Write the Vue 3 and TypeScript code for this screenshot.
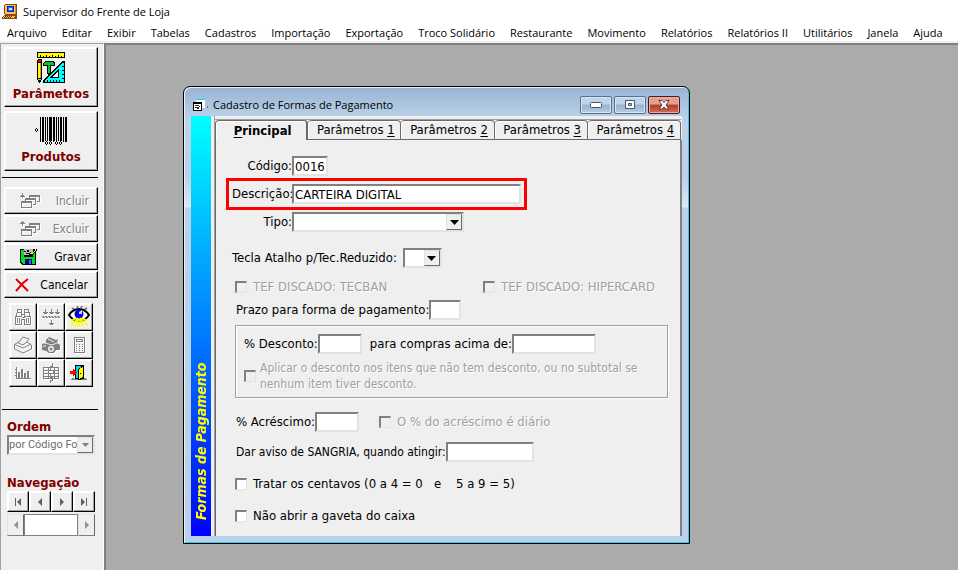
<script setup lang="ts">
import { ref } from 'vue'

const menus: string[] = [
  'Arquivo', 'Editar', 'Exibir', 'Tabelas', 'Cadastros', 'Importação', 'Exportação',
  'Troco Solidário', 'Restaurante', 'Movimento', 'Relatórios', 'Relatórios II',
  'Utilitários', 'Janela', 'Ajuda',
]

const tabs = [1, 2, 3, 4]
const activeTab = ref(0)

const codigo = ref('0016')
const descricao = ref('CARTEIRA DIGITAL')
const tipo = ref('')
const tecla = ref('')
const prazo = ref('')
const desconto = ref('')
const acima = ref('')
const acrescimo = ref('')
const sangria = ref('')
const centavos = ref(false)
const gaveta = ref(false)
</script>

<template>
  <div class="app">
    <header class="titlebar">
      <svg class="app-icon" width="16" height="16" viewBox="0 0 16 16" shape-rendering="crispEdges">
        <path d="M3 0h11l1 1v9l-1 1H3L2 10V1z" fill="#8a4b08" />
        <path d="M3 1h10v9H3z" fill="#ffc45c" />
        <path d="M13 1h1v9h-1z" fill="#d98a1c" />
        <path d="M5 2h7v6H5z" fill="#0a1fb4" />
        <path d="M6 3h5v4H6z" fill="#2a6cff" />
        <path d="M7 4h3v2H7z" fill="#b8e0ff" />
        <path d="M2 11h12l1 1v3H0v-2z" fill="#8a4b08" />
        <path d="M2 12h11l-1 2H1z" fill="#ffc45c" />
        <path d="M3 12h1v1H3zM5 12h1v1H5zM7 12h1v1H7zM9 12h1v1H9zM2 13h1v1H2zM4 13h1v1H4zM6 13h1v1H6zM8 13h1v1H8z" fill="#4a2a00" />
      </svg>
      <span>Supervisor do Frente de Loja</span>
    </header>

    <nav class="menubar">
      <button v-for="m in menus" :key="m" type="button">{{ m }}</button>
    </nav>

    <div class="body">
      <aside class="sidebar">
        <button class="raised big" type="button">
          <svg width="28" height="31" viewBox="0 0 28 31" shape-rendering="crispEdges">
            <path d="M0 0h28v6H0z" />
            <path d="M1 1h26v4H1z" fill="#ff0" />
            <path d="M3 3h1v2H3zM6 4h1v1H6zM9 3h1v2H9zM12 4h1v1h-1zM15 3h1v2h-1zM18 4h1v1h-1zM21 3h1v2h-1zM24 4h1v1h-1z" />
            <path d="M0 8l1-1h3l1 1v19l-1 2-1 2H2l-1-2-1-2z" />
            <path d="M1 8h3v2H1z" fill="#e00000" />
            <path d="M1 11h2v15H1z" fill="#ff0" />
            <path d="M3 11h1v15H3z" fill="#d8a000" />
            <path d="M1 27h3v1H1z" fill="#c0c0c0" />
            <path d="M26 9h2v22H6v-3z" />
            <path d="M26 11h1v19H8v-2z" fill="#0ff" />
            <path d="M22 16v10H12z" />
            <path d="M21 19v6h-6z" fill="#efefef" />
            <path d="M10 28h1v2h-1zM13 28h1v2h-1zM16 28h1v2h-1zM19 28h1v2h-1zM22 28h1v2h-1zM25 26h2v1h-2zM25 22h2v1h-2zM25 18h2v1h-2zM25 14h2v1h-2z" />
            <path d="M8 9h8l2 2v3h-4v8l-2 2-2-2v-8H6v-3z" />
            <path d="M8 10h7l2 1v2h-4v8h-2v-8H7v-2z" fill="#00c828" />
          </svg>
          <span>Parâmetros</span>
        </button>

        <button class="raised big" type="button">
          <svg width="33" height="29" viewBox="0 0 33 29" shape-rendering="crispEdges">
            <path d="M5 0h1v25H5zM7 0h2v25H7zM10 0h1v25h-1zM12 0h1v25h-1zM14 0h3v25h-3zM18 0h2v25h-2zM21 0h1v25h-1zM23 0h1v25h-1zM25 0h2v25h-2zM28 0h1v25h-1zM30 0h2v25h-2z" />
            <path d="M9 24h8v5H9zM19 24h8v5h-8z" fill="#efefef" />
            <path d="M1 11h1v1H1zM0 12h1v2H0zM2 12h1v2H2zM1 14h1v1H1zM11 24h1v1h-1zM10 25h1v2h-1zM12 25h1v2h-1zM11 27h1v1h-1zM15 24h1v1h-1zM14 25h1v2h-1zM16 25h1v2h-1zM15 27h1v1h-1zM21 24h1v1h-1zM20 25h1v2h-1zM22 25h1v2h-1zM21 27h1v1h-1zM25 24h1v1h-1zM24 25h1v2h-1zM26 25h1v2h-1zM25 27h1v1h-1z" />
          </svg>
          <span>Produtos</span>
        </button>

        <hr />

        <div class="actions">
          <button class="raised act" type="button" disabled>
            <svg class="etched" width="20" height="16" viewBox="0 0 20 16" fill="none" stroke="#808080" shape-rendering="crispEdges">
              <path d="M2.500 0v5M0 3.500h5M1 2.500h3" />
              <path d="M9.500 5.500v-3h10v6h-3M5.500 8.500v-3h10v6h-3M1.500 8.500h10v6h-10zM9 3.500h10M5 6.500h10M1 9.500h10" />
            </svg>
            <span>Incluir</span>
          </button>
          <button class="raised act" type="button" disabled>
            <svg class="etched" width="20" height="16" viewBox="0 0 20 16" fill="none" stroke="#808080" shape-rendering="crispEdges">
              <path d="M2.500 0v5M0 2.500h5M1 1.500h3" />
              <path d="M9.500 5.500v-3h10v6h-3M5.500 8.500v-3h10v6h-3M1.500 8.500h10v6h-10zM9 3.500h10M5 6.500h10M1 9.500h10" />
            </svg>
            <span>Excluir</span>
          </button>
          <button class="raised act" type="button">
            <svg width="18" height="17" viewBox="0 0 18 17" shape-rendering="crispEdges">
              <path d="M0 1h14l2 2v14H2l-2-2z" />
              <path d="M1 2h3v7h9V5h2v11H3l-2-2z" fill="#00e020" />
              <path d="M4 1h9v6H4z" fill="#c0c0c0" />
              <path d="M4 3h2v1H4zM7 2h2v2H7zM6 5h4v1H6z" />
              <path d="M5 11h7v5H5z" fill="#000080" />
              <path d="M9 12h2v4H9z" fill="#2868ff" />
              <path d="M8 6l2-2 2 1 4-4 1 1-4 5-3 1z" />
              <path d="M10 5h2l4-3v1l-4 3h-2z" fill="#ff0" />
            </svg>
            <span>Gravar</span>
          </button>
          <button class="raised act cancel" type="button">
            <svg width="14" height="14" viewBox="0 0 14 14" fill="none">
              <path d="M1 1l4 4 8 8M13 1L8 5 1 13" stroke="#e00000" stroke-width="2" />
            </svg>
            <span>Cancelar</span>
          </button>
        </div>

        <div class="tools">
          <button class="raised" type="button" disabled aria-label="Localizar">
            <svg class="etched" width="16" height="18" viewBox="0 0 16 18" fill="none" stroke="#808080" shape-rendering="crispEdges">
              <path d="M2.500 4.500v-3h4v3M9.500 4.500v-3h4v3M1.500 4.500h5v4h-6v8h6v-5h3v5h6v-8h-6v-4h5v4M1.500 4.500v4M6.500 6.500h3M6.500 9.500h3M2.500 10v5M4.500 10v5M11.500 10v5M13.500 10v5" />
            </svg>
          </button>
          <button class="raised" type="button" disabled aria-label="Filtrar">
            <svg class="etched" width="18" height="18" viewBox="0 0 18 18" fill="none" stroke="#808080" shape-rendering="crispEdges">
              <path d="M3.500 1v5M9.500 1v5M15.500 1v5M1 4.500h5M7 4.500h5M13 4.500h5M2 5.500h3M8 5.500h3M14 5.500h3M9.500 12v5M7 15.500h5M8 16.500h3" />
              <path d="M0 8.500h18M1 9.500h18" stroke-dasharray="2 1" />
            </svg>
          </button>
          <button class="raised" type="button" aria-label="Visualizar">
            <svg width="22" height="22" viewBox="0 0 22 22">
              <path d="M4 2l3 2M9 0l1 2M14 0l-1 2M19 2l-3 2" stroke="#808080" stroke-width="2" />
              <path d="M1 9Q5 3 11 3t10 6q-4 6-10 6T1 9z" fill="#fff" stroke="#000" stroke-width="2" />
              <circle cx="11" cy="8" r="4.500" fill="#0000f0" />
              <path d="M11 6l3-2v4h-3z" fill="#c8d8ff" />
              <path d="M10 12L3 20M10 13l-3 8M11 13v8M12 13l3 8M12 12l8 8M3 15l5-3M19 15l-5-3" stroke="#ff0" stroke-width="1.500" fill="none" />
            </svg>
          </button>
          <button class="raised" type="button" disabled aria-label="Imprimir">
            <svg class="etched" width="20" height="18" viewBox="0 0 20 18" fill="none" stroke="#808080">
              <path d="M1.500 8.500L7 5l3-4 6 2-2 3 4.500 3v4L10 17l-8.500-4zM1.500 8.500L10 12l8-4M5 7l5 2 4-3" />
            </svg>
          </button>
          <button class="raised" type="button" disabled aria-label="Imprimir etiqueta">
            <svg class="etched" width="20" height="18" viewBox="0 0 20 18">
              <path d="M5 4l3-3 7 3 2-1-1 4 3 2v5h-4l-2 3H8l-3-2-4-1V8l4-1z" fill="#808080" />
              <path d="M7 3l6 3M4 7l7 2 5-2M2 10h3" stroke="#efefef" fill="none" />
              <circle cx="10" cy="13" r="3" fill="#efefef" />
              <circle cx="10" cy="13" r="1.500" fill="#808080" />
            </svg>
          </button>
          <button class="raised" type="button" disabled aria-label="Calculadora">
            <svg class="etched" width="13" height="18" viewBox="0 0 13 18" fill="none" stroke="#808080" shape-rendering="crispEdges">
              <path d="M1.500 1.500h10v15h-10zM3.500 3.500h6v2h-6z" />
              <path d="M3 8.500h7M3 10.500h7M3 12.500h7M3 14.500h7" stroke-dasharray="1 2" />
            </svg>
          </button>
          <button class="raised" type="button" disabled aria-label="Gráfico">
            <svg class="etched" width="16" height="14" viewBox="0 0 16 14" fill="none" stroke="#808080" shape-rendering="crispEdges">
              <path d="M1.500 1v12M1 12.500h15M0 3.500h2M0 6.500h2M0 9.500h2" />
              <path d="M4 6v6M7 3v9M10 7v5M13 5v7" stroke-width="2" />
            </svg>
          </button>
          <button class="raised" type="button" disabled aria-label="Tabela">
            <svg class="etched" width="18" height="20" viewBox="0 0 18 20" fill="none" stroke="#808080" shape-rendering="crispEdges">
              <path d="M1.500 4.500h15v11h-15zM1 7.500h16M1 10.500h16M1 13.500h16M6.500 4v12M12.500 4v12" />
              <path d="M10.500 0v3h-2v4h3v3h-3v4h2v3h-2v3" />
            </svg>
          </button>
          <button class="raised" type="button" aria-label="Sair">
            <svg width="18" height="16" viewBox="0 0 18 16" shape-rendering="crispEdges">
              <path d="M0 15h1v-1h1v-1h2v1h2v-1h10v1h1v1z" fill="#808080" />
              <path d="M5 0h9v14H5z" />
              <path d="M6 1h5v12H6z" fill="#00d8e8" />
              <path d="M8 4l6-3v11l-4 3H8z" />
              <path d="M9 4l4-2v10l-4 2z" fill="#ff0" />
              <path d="M10 8h1v1h-1z" />
              <path d="M0 6h3V4l4 3.500L3 11V9H0z" fill="#f00" />
            </svg>
          </button>
        </div>

        <hr />

        <section class="ordem">
          <label for="ordem">Ordem</label>
          <div class="combo">
            <select id="ordem" disabled>
              <option>por Código Fo</option>
            </select>
            <span class="drop"><svg width="7" height="4" viewBox="0 0 7 4"><path d="M0 0h7L3.500 4z" fill="#808080" /></svg></span>
          </div>
        </section>

        <section class="navegacao">
          <h2>Navegação</h2>
          <div class="nav-buttons">
            <button class="raised" type="button" aria-label="Primeiro">
              <svg width="8" height="8" viewBox="0 0 8 8"><path d="M1 0h1v8H1zM7 0v8L3 4z" fill="#606060" /></svg>
            </button>
            <button class="raised" type="button" aria-label="Anterior">
              <svg width="8" height="8" viewBox="0 0 8 8"><path d="M6 0v8L2 4z" fill="#606060" /></svg>
            </button>
            <button class="raised" type="button" aria-label="Próximo">
              <svg width="8" height="8" viewBox="0 0 8 8"><path d="M2 0v8l4-4z" fill="#606060" /></svg>
            </button>
            <button class="raised" type="button" aria-label="Último">
              <svg width="8" height="8" viewBox="0 0 8 8"><path d="M6 0h1v8H6zM1 0v8l4-4z" fill="#606060" /></svg>
            </button>
          </div>
          <div class="scroller">
            <button type="button" disabled aria-label="Rolar para a esquerda">
              <svg width="8" height="8" viewBox="0 0 8 8"><path d="M6 0v8L2 4z" fill="#909090" /></svg>
            </button>
            <span class="track"></span>
            <button type="button" disabled aria-label="Rolar para a direita">
              <svg width="8" height="8" viewBox="0 0 8 8"><path d="M2 0v8l4-4z" fill="#909090" /></svg>
            </button>
          </div>
        </section>
      </aside>

      <main class="desktop">
        <section class="window">
          <header class="caption">
            <svg width="15" height="12" viewBox="0 0 15 12" shape-rendering="crispEdges">
              <path d="M3 0h9v1H3z" fill="#00d8e0" />
              <path d="M3 1h9v8H3z" fill="#fff" />
              <path d="M0 3h9v9H0z" />
              <path d="M1 5h7v6H1z" fill="#fff" />
              <path d="M2 6h4v1H2zM2 8h4v1H2zM6 7h1v1H6zM4 9h2v1H4z" fill="#303030" />
              <path d="M14 7h1v2h-1z" fill="#607890" />
            </svg>
            <h1>Cadastro de Formas de Pagamento</h1>
            <button type="button" aria-label="Minimizar">
              <svg width="12" height="6" viewBox="0 0 12 6"><rect x="0.500" y="0.500" width="11" height="5" rx="1" fill="#fff" stroke="#45566b" /></svg>
            </button>
            <button type="button" aria-label="Maximizar">
              <svg width="12" height="10" viewBox="0 0 12 10"><path d="M1.500.5h9v8h-9zM4.500 3.500v2h3v-2z" fill="#fff" fill-rule="evenodd" stroke="#45566b" /></svg>
            </button>
            <button class="close" type="button" aria-label="Fechar">
              <svg width="12" height="10" viewBox="0 0 12 10"><path d="M1 .5h3l2 2 2-2h3L8 5l3 4H8L6 7 4 9H1l3-4z" fill="#fff" stroke="#5a3a40" /></svg>
            </button>
          </header>

          <div class="client">
            <div class="band"><span>Formas de Pagamento</span></div>

            <div class="notebook">
              <div class="tabs" role="tablist">
                <button type="button" role="tab" :class="{ active: activeTab === 0 }" @click="activeTab = 0">
                  <span><u>P</u>rincipal</span>
                </button>
                <button
                  v-for="n in tabs"
                  :key="n"
                  type="button"
                  role="tab"
                  :class="{ active: activeTab === n }"
                  @click="activeTab = n"
                >
                  <span>Parâmetros <u>{{ n }}</u></span>
                </button>
              </div>

              <form class="page" @submit.prevent>
                <div class="row key">
                  <label for="codigo">Código:</label>
                  <input id="codigo" v-model="codigo" class="w-code" type="text" />
                </div>
                <div class="row key marked">
                  <label for="descricao">Descrição:</label>
                  <input id="descricao" v-model="descricao" class="grow" type="text" />
                </div>
                <div class="row key">
                  <label for="tipo">Tipo:</label>
                  <div class="combo w-tipo">
                    <select id="tipo" v-model="tipo"><option value=""></option></select>
                    <span class="drop"><svg width="9" height="5" viewBox="0 0 9 5"><path d="M0 0h9L4.500 5z" /></svg></span>
                  </div>
                </div>

                <div class="row tecla">
                  <label for="tecla">Tecla Atalho p/Tec.Reduzido:</label>
                  <div class="combo w-tecla">
                    <select id="tecla" v-model="tecla"><option value=""></option></select>
                    <span class="drop"><svg width="9" height="5" viewBox="0 0 9 5"><path d="M0 0h9L4.500 5z" /></svg></span>
                  </div>
                </div>

                <div class="tef">
                  <label class="check off"><input type="checkbox" disabled /><span>TEF DISCADO: TECBAN</span></label>
                  <label class="check off"><input type="checkbox" disabled /><span>TEF DISCADO: HIPERCARD</span></label>
                </div>

                <div class="row inset">
                  <label for="prazo">Prazo para forma de pagamento:</label>
                  <input id="prazo" v-model="prazo" class="w-small" type="text" />
                </div>

                <div class="group">
                  <div class="row">
                    <label for="desconto">% Desconto:</label>
                    <input id="desconto" v-model="desconto" class="w-pct" type="text" />
                    <label class="second" for="acima">para compras acima de:</label>
                    <input id="acima" v-model="acima" class="w-money" type="text" />
                  </div>
                  <label class="check off wrap">
                    <input type="checkbox" disabled />
                    <span>Aplicar o desconto nos itens que não tem desconto, ou no subtotal se nenhum item tiver desconto.</span>
                  </label>
                </div>

                <div class="row inset">
                  <label for="acrescimo">% Acréscimo:</label>
                  <input id="acrescimo" v-model="acrescimo" class="w-pct" type="text" />
                  <label class="check off daily"><input type="checkbox" disabled /><span>O % do acréscimo é diário</span></label>
                </div>

                <div class="row inset sangria">
                  <label for="sangria">Dar aviso de SANGRIA, quando atingir:</label>
                  <input id="sangria" v-model="sangria" class="w-limit" type="text" />
                </div>

                <label class="check line"><input v-model="centavos" type="checkbox" /><span>Tratar os centavos (0 a 4 = 0 &nbsp; e &nbsp;&nbsp; 5 a 9 = 5)</span></label>
                <label class="check line"><input v-model="gaveta" type="checkbox" /><span>Não abrir a gaveta do caixa</span></label>
              </form>
            </div>
          </div>
        </section>
      </main>
    </div>
  </div>
</template>

<style>
html,
body {
  margin: 0;
  background: #ababab;
}
</style>

<style scoped>
* {
  box-sizing: border-box;
}

.app {
  display: flex;
  flex-direction: column;
  min-height: 100vh;
  color: #000;
  font: 12px/16px "DejaVu Sans Condensed", "DejaVu Sans", sans-serif;
}

button,
input,
select {
  margin: 0;
  padding: 0;
  border: 0;
  border-radius: 0;
  background: none;
  color: inherit;
  font: inherit;
}

svg {
  display: block;
  flex: none;
}

.titlebar {
  display: flex;
  align-items: center;
  gap: 5px;
  height: 24px;
  padding-left: 2px;
  background: #fff;
  font: 11px/16px "Open Sans", sans-serif;
}

.menubar {
  display: flex;
  gap: 15px;
  height: 19px;
  padding-left: 7px;
  border-bottom: 2px solid #f0f0f0;
  background: #fff;
  font: 11px/18px "Open Sans", sans-serif;
}

.menubar button {
  white-space: nowrap;
}

.body {
  display: flex;
  flex: 1;
}

/* Sidebar */
.sidebar {
  flex: none;
  width: 104px;
  padding: 3px 5px 0 3px;
  border-top: 1px solid #a0a0a0;
  border-left: 1px solid #a0a0a0;
  border-right: 1px solid #fff;
  background: #efefef;
}

.raised {
  display: flex;
  align-items: center;
  justify-content: center;
  border: solid;
  border-width: 1px;
  border-color: #fff #000 #000 #fff;
  box-shadow: inset -1px -1px #a0a0a0, inset 1px 1px #fff;
}

.big {
  flex-direction: column;
  gap: 3px;
  width: 94px;
  height: 60px;
  margin-bottom: 4px;
  color: #800000;
  font: bold 13px/16px "DejaVu Sans Condensed", "DejaVu Sans", sans-serif;
}

hr {
  height: 1px;
  margin: 6px 0 9px -2px;
  border: 0;
  background: #000;
}

.actions {
  display: flex;
  flex-direction: column;
  gap: 1px;
}

.act {
  justify-content: space-between;
  width: 94px;
  height: 27px;
  padding: 0 6px 0 15px;
}

.act:disabled {
  padding-right: 8px;
  color: #808080;
  text-shadow: 1px 1px #fff;
}

.cancel {
  padding: 0 9px 0 10px;
}

.etched {
  filter: drop-shadow(1px 1px 0 #fff);
}

.tools {
  display: grid;
  grid-template-columns: repeat(3, 28px);
  margin: 5px 0 22px 5px;
}

.tools .raised {
  height: 28px;
}

.ordem,
.navegacao {
  padding-left: 3px;
}

.ordem label,
.navegacao h2 {
  display: block;
  margin: 0;
  color: #800000;
  font: bold 13px/16px "DejaVu Sans Condensed", "DejaVu Sans", sans-serif;
}

.combo {
  display: flex;
  height: 20px;
  border: 2px solid;
  border-color: #808080 #e3e3e3 #e3e3e3 #808080;
  background: #fff;
}

.combo select {
  flex: 1;
  min-width: 0;
  appearance: none;
}

.drop {
  display: flex;
  flex: none;
  align-items: center;
  justify-content: center;
  width: 16px;
  border: 1px solid;
  border-color: #e3e3e3 #696969 #696969 #e3e3e3;
  background: #efefef;
  pointer-events: none;
}

.ordem {
  margin-bottom: 20px;
}

.ordem .combo {
  width: 88px;
}

.ordem select {
  color: #6d6d6d;
  font: 11px/16px Roboto, sans-serif;
  opacity: 1;
}

.nav-buttons {
  display: grid;
  grid-template-columns: repeat(4, 22px);
}

.nav-buttons .raised {
  height: 21px;
}

.scroller {
  display: flex;
  width: 88px;
  height: 22px;
  margin-top: 2px;
}

.scroller button {
  display: flex;
  align-items: center;
  justify-content: center;
  width: 17px;
  border: 1px solid;
  border-color: #e3e3e3 #696969 #808080 #e3e3e3;
}

.track {
  flex: 1;
  border: 1px solid #808080;
  background: #fff;
}

/* Workspace */
.desktop {
  position: relative;
  flex: 1;
  border-top: 2px solid #808080;
  border-left: 2px solid #808080;
  background: #ababab;
}

.window {
  position: absolute;
  top: 41px;
  left: 77px;
  width: 507px;
  padding: 0 7px 7px;
  border: 1px solid #000;
  border-radius: 7px 7px 0 0;
  background: linear-gradient(#98b3d1, #bcd3eb 32px, #bad1e9 90px, #dce8f5 120px, #b9d1ea 121px);
  box-shadow: inset 1px 1px #e8f2fb, inset -1px -1px #30c8e8;
}

.caption {
  display: flex;
  align-items: center;
  gap: 2px;
  height: 29px;
  padding: 6px 2px 0;
}

.caption h1 {
  flex: 1;
  margin: 0 0 0 3px;
  font: 11px/16px "Open Sans", sans-serif;
}

.caption button {
  display: flex;
  align-items: center;
  justify-content: center;
  width: 32px;
  height: 18px;
  border: 1px solid #5b7189;
  border-radius: 2px;
  background: linear-gradient(#c0d3e8 45%, #98b2cf 50%, #b6cde6);
  box-shadow: inset 0 0 0 1px #d8e5f2;
}

.caption .close {
  border-color: #4a1820;
  background: linear-gradient(#e0a090 45%, #b83820 50%, #d07058);
  box-shadow: inset 0 0 0 1px #e8b0a4;
}

.client {
  display: flex;
  background: #efefef;
  font-size: 13px;
}

.band {
  display: flex;
  flex: none;
  align-items: center;
  width: 20px;
  padding-top: 16px;
  background: linear-gradient(#00f, #0ff);
  color: #ff0;
  font: italic bold 14px/20px "DejaVu Sans Condensed", "DejaVu Sans", sans-serif;
  writing-mode: vertical-rl;
  transform: rotate(180deg);
}

.notebook {
  flex: 1;
  margin-left: 3px;
  padding-top: 3px;
  border-left: 1px solid #a0a0a0;
}

.tabs {
  display: grid;
  grid-template-columns: repeat(5, 1fr);
  margin-right: 1px;
  border-top: 1px solid #a0a0a0;
}

.tabs button {
  height: 20px;
  padding-left: 3px;
  border: solid #696969;
  border-width: 1px 1px 1px 0;
  border-radius: 4px 4px 0 0;
  box-shadow: inset 1px 1px #fff;
  white-space: nowrap;
}

.tabs .active {
  border-width: 1px 2px 0 1px;
  font-weight: bold;
}

.tabs u {
  text-underline-offset: 2px;
}

.page {
  padding: 16px 12px 12px 16px;
  border: solid #696969;
  border-width: 0 2px 0 1px;
  border-right-color: #808080;
}

.row {
  display: flex;
  align-items: center;
  height: 20px;
}

.row label {
  white-space: nowrap;
}

.row input[type="text"] {
  height: 20px;
  padding: 0 1px;
  border: 2px solid;
  border-color: #808080 #e3e3e3 #e3e3e3 #808080;
  background: #fff;
}

.key {
  width: 289px;
  margin-bottom: 8px;
}

.key > label {
  flex: none;
  width: 60px;
  text-align: right;
}

.marked {
  outline: 3px solid #f00;
  outline-offset: 3px;
}

.grow {
  flex: 1;
  min-width: 0;
}

.w-code {
  width: 36px;
}

.w-tipo {
  width: 172px;
}

.w-tecla {
  width: 39px;
  margin-left: 6px;
}

.w-small {
  width: 32px;
}

.w-pct {
  width: 44px;
}

.w-money {
  width: 84px;
}

.w-limit {
  width: 88px;
}

.tecla {
  margin-top: 16px;
}

.tef {
  display: grid;
  grid-template-columns: 248px 1fr;
  margin: 11px 0 5px 3px;
}

.inset {
  padding-left: 4px;
}

.check {
  display: flex;
  align-items: center;
  gap: 6px;
}

.check input {
  flex: none;
  width: 12px;
  height: 12px;
  border: solid;
  border-width: 2px 1px 1px 2px;
  border-color: #808080 #e3e3e3 #e3e3e3 #808080;
  background: #fff;
  appearance: none;
}

.off {
  color: #a0a0a0;
  text-shadow: 1px 1px #fff;
}

.off input {
  background: #efefef;
}

.group {
  margin: 5px 0 14px 3px;
  padding: 8px 6px 5px 8px;
  border: 1px solid #a0a0a0;
  box-shadow: 1px 1px #fff, inset 1px 1px #fff;
}

.second {
  margin-left: 8px;
}

.wrap {
  gap: 4px;
  margin-top: 6px;
  font-size: 12px;
}

.daily {
  margin-left: 20px;
}

.sangria {
  margin: 10px 0 14px;
  font-size: 12px;
}

.line {
  margin: 0 0 16px 3px;
}

.line:last-child {
  margin-bottom: 0;
}
</style>
